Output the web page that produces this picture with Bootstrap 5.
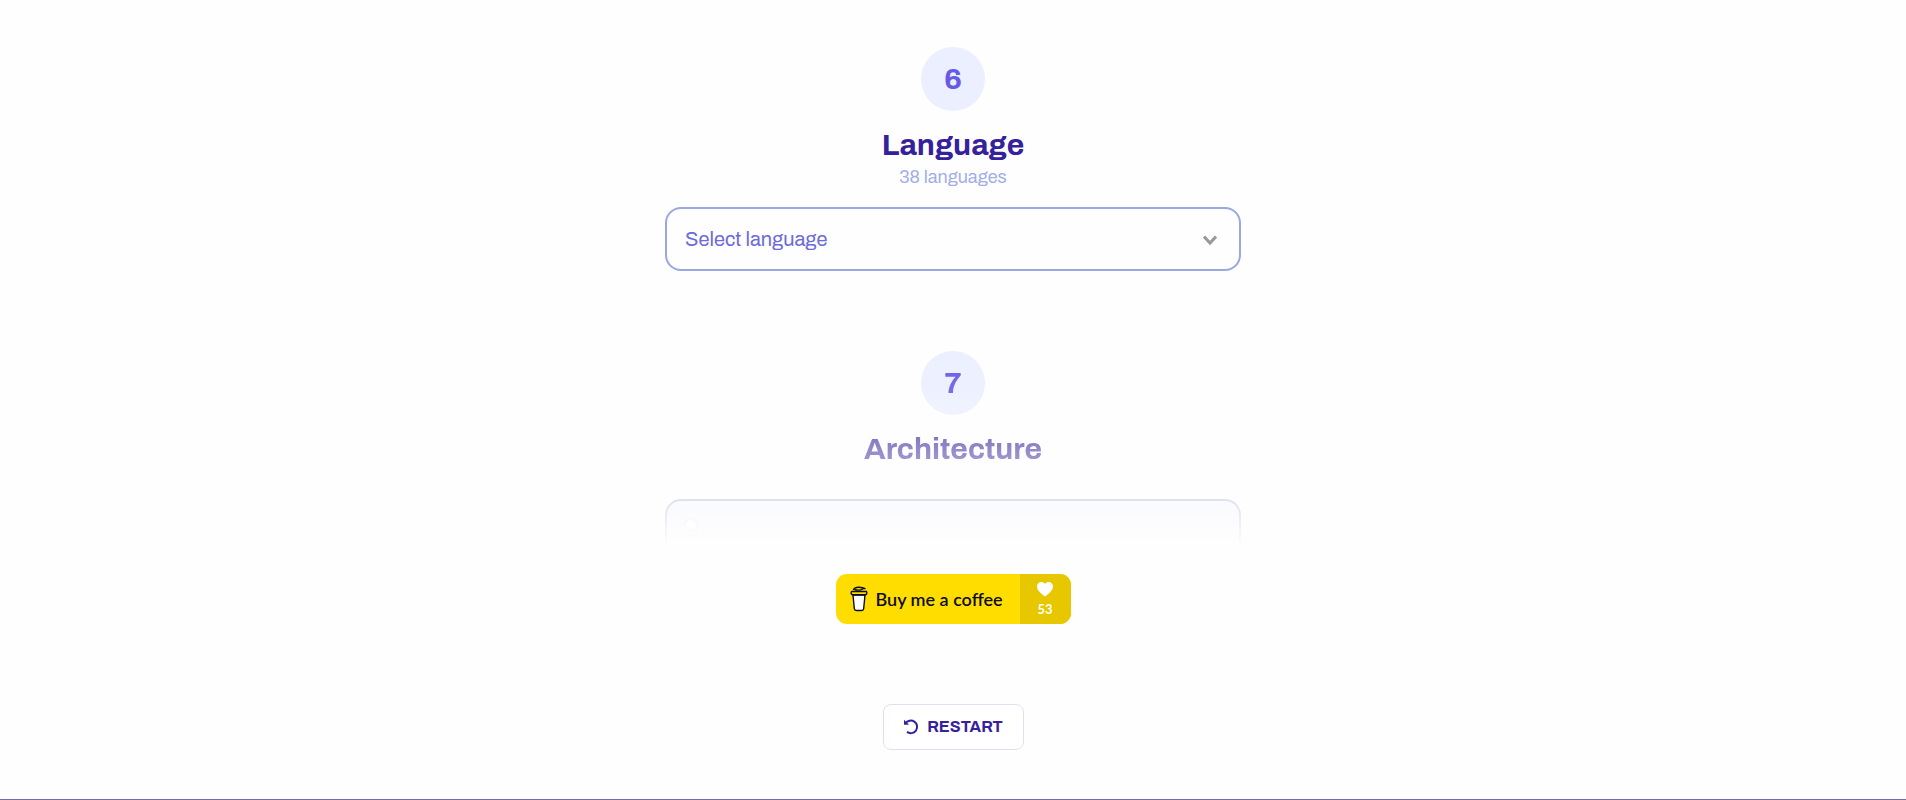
<!DOCTYPE html>
<html lang="en">
<head>
<meta charset="utf-8">
<meta name="viewport" content="width=device-width, initial-scale=1">
<title>Language</title>
<link href="https://cdn.jsdelivr.net/npm/bootstrap@5.3.0/dist/css/bootstrap.min.css" rel="stylesheet">
<style>
body { font-family: Archivo, "Liberation Sans", Arial, sans-serif; background: #fefefe; }
.page-main { padding-top: 47px; }
.steps { max-width: 576px; }
.step-number { width: 64px; height: 64px; background: #ebefff; color: #665be4; font-size: 30px; line-height: 32px; }
.step-title { font-size: 30px; line-height: 36px; color: #35219b; }
.step-note { font-size: 18px; line-height: 28px; color: #a3aee6; }
.field { height: 64px; border: 2px solid #9ba7e0; border-radius: 16px; }
.language-select { appearance: none; padding: 0 48px 0 18px; font-size: 20px; color: #6c6bdc; background: transparent; }
.chevron { right: 24px; top: 28px; pointer-events: none; }
.next-step { height: 207px; margin-top: 80px; margin-bottom: 16px; -webkit-mask-image: linear-gradient(#000, rgba(0,0,0,.88) 20%, rgba(0,0,0,.5) 50%, rgba(0,0,0,.25) 71%, transparent 94%); mask-image: linear-gradient(#000, rgba(0,0,0,.88) 20%, rgba(0,0,0,.5) 50%, rgba(0,0,0,.25) 71%, transparent 94%); }
.locked-field { margin-top: 32px; padding: 0 14px; border-color: #8087b8; background: #eef0ff; }
.locked-field svg { margin-bottom: 8px; }
.coffee { height: 50px; width: 235px; border-radius: 11px; background: #ffdd00; color: #0d0c22; font-family: Lato, sans-serif; font-size: 18px; font-weight: 600; padding-left: 14px; }
.coffee-count { width: 51px; background: #e6c700; font-size: 13px; line-height: 16px; }
.restart { height: 46px; width: 141px; margin-top: 80px; margin-bottom: 48px; border: 1px solid #dfe1f3; border-radius: 8px; background: #fff; color: #35219b; font-size: 16px; }
.page-footer { height: 1px; background: #7568b4; }
</style>
</head>
<body class="d-flex flex-column min-vh-100">
<main class="page-main container-fluid flex-grow-1 d-flex flex-column align-items-center">
  <section class="steps w-100 text-center">
    <div class="step-number rounded-circle d-flex align-items-center justify-content-center fw-bold mx-auto">6</div>
    <h2 class="step-title fw-bold mt-3 mb-0">Language</h2>
    <label for="language" class="step-note d-block mb-3">38 languages</label>
    <div class="position-relative">
      <select id="language" class="field language-select w-100 d-block">
        <option>Select language</option>
        <option>English</option>
      </select>
      <svg class="chevron position-absolute" width="14" height="12" viewBox="0 0 14 12" fill="none" stroke="#999" stroke-width="3" aria-hidden="true"><path d="M1 1.500l6 6.500 6-6.500"/></svg>
    </div>
  </section>
  <section class="next-step steps w-100 text-center overflow-hidden">
    <div class="step-number rounded-circle d-flex align-items-center justify-content-center fw-bold mx-auto">7</div>
    <h2 class="step-title fw-bold mt-3 mb-0">Architecture</h2>
    <div class="locked-field field d-flex align-items-center">
      <svg width="20" height="20" viewBox="0 0 20 20" fill="#fff" stroke="#d9dbe8" stroke-width="2" aria-hidden="true"><circle cx="10" cy="8" r="6"/><path d="M14 13l4 4"/></svg>
    </div>
  </section>
  <a href="#coffee" class="coffee d-flex overflow-hidden text-decoration-none">
    <span class="flex-grow-1 d-flex align-items-center gap-2">
      <svg width="18" height="26" viewBox="0 0 18 26" fill="none" stroke="#0d0c22" stroke-width="1.400" stroke-linejoin="round" stroke-linecap="round" aria-hidden="true">
        <path d="M3 9l1.300 13.500q.2 2 2 2h5.400q1.800 0 2-2L15 9z" fill="#fff"/>
        <path d="M1.500 5.500h15q1 3-1 3.300h-13Q.5 8.500 1.500 5.500z" fill="#ffdd00"/><path d="M3.500 3.500Q5 1 9 1.200t6 1.500M5 3.800q5 1 8-.8"/>
      </svg>
      <span>Buy me a coffee</span>
    </span>
    <span class="coffee-count d-flex flex-column align-items-center justify-content-center text-white fw-bold gap-1">
      <svg width="18" height="16" viewBox="0 0 18 16" fill="currentColor" aria-hidden="true"><path d="M9 15.500C5.500 13 1 9.500 1 5.500 1 1 6.500-.5 9 3c2.500-3.500 8-2 8 2.500 0 4-4.500 7.500-8 10z"/></svg>
      <span>53</span>
    </span>
  </a>
  <button type="button" class="restart d-flex align-items-center justify-content-center gap-2 fw-bold">
    <svg width="16" height="16" viewBox="0 0 16 16" fill="none" stroke="currentColor" stroke-width="2" aria-hidden="true"><path d="M2.500 4.500A6.300 6.300 0 1 1 4 12.900"/><path d="M1 .8v5h5z" fill="currentColor" stroke="none"/></svg>
    RESTART
  </button>
</main>
<footer class="page-footer"></footer>
<script src="https://cdn.jsdelivr.net/npm/bootstrap@5.3.0/dist/js/bootstrap.bundle.min.js"></script>
</body>
</html>
